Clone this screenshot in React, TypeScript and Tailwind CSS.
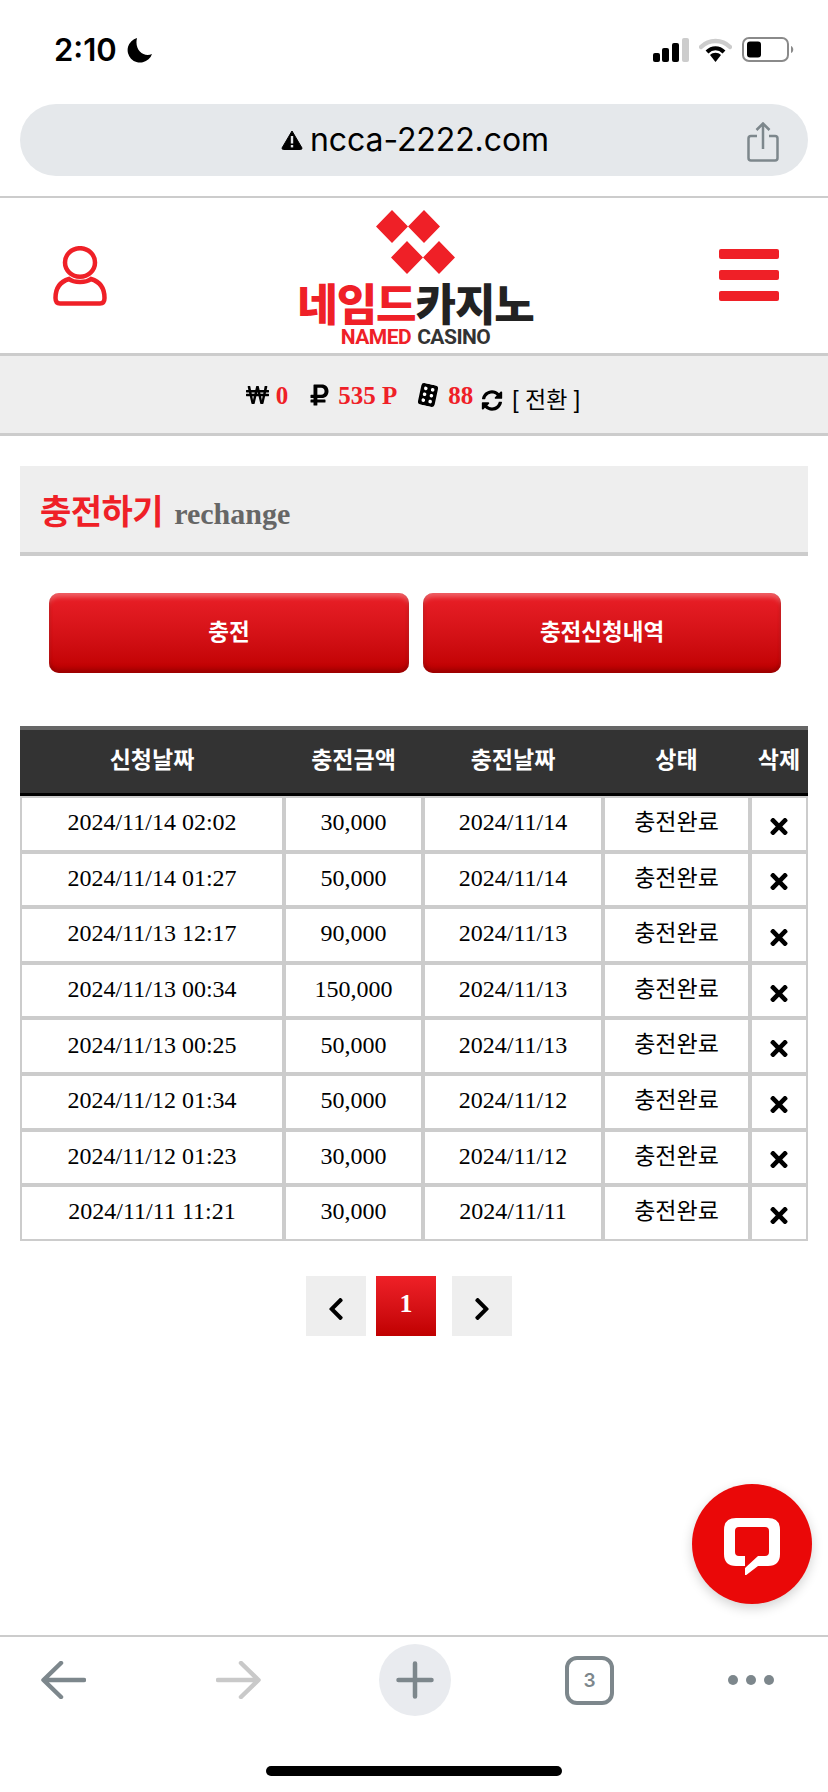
import { FaWonSign, FaRubleSign, FaSyncAlt, FaTimes, FaChevronLeft, FaChevronRight } from "react-icons/fa";

const rows = [
  ["2024/11/14 02:02", "30,000", "2024/11/14"],
  ["2024/11/14 01:27", "50,000", "2024/11/14"],
  ["2024/11/13 12:17", "90,000", "2024/11/13"],
  ["2024/11/13 00:34", "150,000", "2024/11/13"],
  ["2024/11/13 00:25", "50,000", "2024/11/13"],
  ["2024/11/12 01:34", "50,000", "2024/11/12"],
  ["2024/11/12 01:23", "30,000", "2024/11/12"],
  ["2024/11/11 11:21", "30,000", "2024/11/11"],
];

const serif = "font-['Liberation_Serif','Noto_Sans_CJK_KR',serif]";

function Status() {
  return (
    <div className="h-[104px] flex items-start justify-between pt-[37px] pl-[54px] pr-[33px]">
      <div className="flex items-center gap-[10px] h-[25px]">
        <span className="font-['Inter',sans-serif] font-semibold text-[31px] leading-[25px] text-black">2:10</span>
        <svg width="26" height="26" viewBox="0 0 26 26"><path d="M10 1 A12.5 12.5 0 1 0 25 17 C17 21 7 13 10 1Z" fill="#000" /></svg>
      </div>
      <div className="flex items-center gap-[10px] h-[25px]">
        <svg width="36" height="24" viewBox="0 0 36 24">
          <rect x="0" y="15" width="7" height="9" rx="2" fill="#000" />
          <rect x="9" y="10" width="7" height="14" rx="2" fill="#000" />
          <rect x="19" y="5" width="7" height="19" rx="2" fill="#000" />
          <rect x="29" y="0" width="7" height="24" rx="2" fill="#ccc" />
        </svg>
        <svg width="33" height="24" viewBox="0 0 33 24">
          <path d="M2 9 C10 1 23 1 31 9" fill="none" stroke="#ccc" strokeWidth="4.5" strokeLinecap="round" />
          <path d="M8 14 C13 9 20 9 25 14" fill="none" stroke="#000" strokeWidth="4" />
          <path d="M11 17 C14 14 19 14 22 17 L16.5 24Z" fill="#000" />
        </svg>
        <svg width="53" height="25" viewBox="0 0 53 25">
          <rect x="1" y="1" width="45" height="23" rx="6" fill="none" stroke="#8a8a8a" strokeWidth="2" />
          <rect x="5" y="4.5" width="14" height="16" rx="3" fill="#000" />
          <path d="M49 9 C52 10 52 15 49 16Z" fill="#8a8a8a" />
        </svg>
      </div>
    </div>
  );
}

function UrlBar() {
  return (
    <div className="mx-5 h-[72px] rounded-[36px] bg-[#e5e8eb] flex items-center relative">
      <div className="flex-1 flex items-center justify-center gap-[7px] pl-[2px]">
        <svg width="22" height="20" viewBox="0 0 22 20">
          <path d="M11 1 L21 18 Q21 19.5 19.5 19.5 H2.5 Q1 19.5 1 18Z" fill="#000" stroke="#000" strokeLinejoin="round" />
          <rect x="9.8" y="6" width="2.4" height="7.5" fill="#e5e8eb" />
          <rect x="9.8" y="15" width="2.4" height="2.4" fill="#e5e8eb" />
        </svg>
        <span className="font-['Inter',sans-serif] text-[32px] leading-[40px] tracking-[-0.1px] text-black">ncca-2222.com</span>
      </div>
      <svg className="absolute right-[29px] top-[18px]" width="32" height="40" viewBox="0 0 32 40" fill="none" stroke="#7d878c" strokeWidth="2.5">
        <path d="M10 14 H4 Q1.5 14 1.5 16.5 V36 Q1.5 38.5 4 38.5 H28 Q30.5 38.5 30.5 36 V16.5 Q30.5 14 28 14 H22" />
        <path d="M16 27 V2 M9.5 8 L16 1.5 L22.5 8" />
      </svg>
    </div>
  );
}

function Logo() {
  return (
    <div className="flex flex-col items-center w-[250px]">
      <svg width="79" height="64" viewBox="0 0 79 64">
        <path d="M16 0 L32 16.5 L16 33 L0 16.5Z M48 0 L64 16.5 L48 33 L32 16.5Z M31 31 L47 47.5 L31 64 L15 47.5Z M63 31 L79 47.5 L63 64 L47 47.5Z" fill="#ef2027" />
      </svg>
      <div className="mt-[9px] h-[38px] flex items-center font-['Noto_Sans_CJK_KR',sans-serif] font-black text-[44px] leading-[38px] tracking-[-1.1px] whitespace-nowrap">
        <span className="text-[#ef2027]">네임드</span><span className="text-[#222]">카지노</span>
      </div>
      <div className="mt-[8px] h-[16px] flex items-center gap-[6px] font-['Roboto',sans-serif] font-bold text-[21px] leading-[16px] tracking-[-0.5px] whitespace-nowrap">
        <span className="text-[#ef2027]">NAMED</span><span className="text-[#333]">CASINO</span>
      </div>
    </div>
  );
}

function Header() {
  return (
    <div className="h-[160px] border-t-2 border-b-[3px] border-[#ccc] flex items-center justify-between pl-[53px] pr-[49px] mt-[20px]">
      <svg width="54" height="60" viewBox="0 0 54 60" fill="none" stroke="#ef2027" strokeWidth="4.5">
        <ellipse cx="27" cy="16.5" rx="15" ry="14.3" />
        <path d="M16 33 C6 36 2.5 44 2.5 52 Q2.5 57.5 7 57.5 H47 Q51.5 57.5 51.5 52 C51.5 44 48 36 38 33 C33 37 21 37 16 33Z" />
      </svg>
      <div className="mt-[4px] ml-[5px]"><Logo /></div>
      <div className="flex flex-col gap-[11px] -mt-[2px]">
        <div className="w-[60px] h-[10px] bg-[#ef2027] rounded-[2px]" />
        <div className="w-[60px] h-[10px] bg-[#ef2027] rounded-[2px]" />
        <div className="w-[60px] h-[10px] bg-[#ef2027] rounded-[2px]" />
      </div>
    </div>
  );
}

function Stats() {
  return (
    <div className={`h-[80px] bg-[#eee] border-b-[3px] border-[#ccc] flex items-center justify-center pr-[2px] ${serif} text-[25px] font-bold text-[#ef2027] whitespace-nowrap`}>
      <FaWonSign className="text-black w-[23px] h-[22px] mr-[7px]" />
      <span className="mt-[3px]">0</span>
      <FaRubleSign className="text-black w-[19px] h-[24px] ml-[22px] mr-[9px] mt-[1px]" />
      <span className="mt-[3px]">535 P</span>
      <svg width="22" height="22" viewBox="0 0 22 22" className="ml-[20px] mr-[9px] rotate-[12deg]">
        <rect x="2.5" y="0" width="17" height="22" rx="3" fill="#000" />
        <circle cx="7.5" cy="5" r="1.8" fill="#fff" /><circle cx="14.5" cy="5" r="1.8" fill="#fff" />
        <circle cx="7.5" cy="11" r="1.8" fill="#fff" /><circle cx="14.5" cy="11" r="1.8" fill="#fff" />
        <circle cx="7.5" cy="17" r="1.8" fill="#fff" /><circle cx="14.5" cy="17" r="1.8" fill="#fff" />
      </svg>
      <span className="mt-[3px]">88</span>
      <FaSyncAlt className="text-black w-[22px] h-[21px] ml-[8px] mr-[9px] mt-[11px]" />
      <span className="font-normal text-black text-[23px] mt-[11px] font-['Liberation_Sans','Noto_Sans_CJK_KR',sans-serif]">[ 전환 ]</span>
    </div>
  );
}

function Title() {
  return (
    <div className="mx-5 mt-[30px] h-[90px] bg-[#eee] border-b-4 border-[#ccc] flex items-end pb-[18px] pl-[20px]">
      <span className="font-['Noto_Sans_CJK_KR',sans-serif] font-bold text-[34px] leading-[44px] mb-[2px] text-[#ef2027] tracking-[-0.5px]">충전하기</span>
      <span className={`${serif} font-bold text-[30px] leading-[40px] text-[#666] ml-[11px]`}>rechange</span>
    </div>
  );
}

function Btn({ label, w }: { label: string; w: string }) {
  return (
    <div className={`${w} h-[80px] pb-[6px] rounded-[10px] flex items-center justify-center bg-gradient-to-b from-[#ea1f27] to-[#c00000] shadow-[inset_0_6px_5px_-2px_rgba(255,255,255,0.3),inset_0_-6px_5px_-2px_rgba(120,0,0,0.5),inset_3px_0_3px_-2px_rgba(120,0,0,0.25),inset_-3px_0_3px_-2px_rgba(120,0,0,0.25)] font-['Noto_Sans_CJK_KR',sans-serif] font-bold text-[22.5px] leading-[30px] text-white`}>
      {label}
    </div>
  );
}

function Table() {
  const ko = "font-['Noto_Sans_CJK_KR',sans-serif]";
  const th = `${ko} font-bold text-[23px] text-white text-center align-middle pb-[6px] bg-[#333] border-t-4 border-t-[#666] border-b-[3px] border-b-black`;
  const td = `border-2 border-[#ccc] text-center align-middle text-[24px] pb-[3px] text-black ${serif}`;
  return (
    <div className="mx-5 mt-[53px]">
      <table className="w-[788px] table-fixed border-separate border-spacing-0">
        <colgroup>
          <col className="w-[264px]" />
          <col className="w-[139px]" />
          <col className="w-[180px]" />
          <col className="w-[147px]" />
          <col className="w-[58px]" />
        </colgroup>
        <thead>
          <tr className="h-[70px]">
            <th className={th}>신청날짜</th>
            <th className={th}>충전금액</th>
            <th className={th}>충전날짜</th>
            <th className={th}>상태</th>
            <th className={th}>삭제</th>
          </tr>
        </thead>
        <tbody>
          {rows.map((r) => (
            <tr key={r[0]} className="h-[55.6px]">
              <td className={td}>{r[0]}</td>
              <td className={td}>{r[1]}</td>
              <td className={td}>{r[2]}</td>
              <td className={`border-2 border-[#ccc] text-center align-middle text-[23px] text-black pb-[7px] ${ko}`}>충전완료</td>
              <td className="border-2 border-[#ccc] align-middle pt-[5px]"><FaTimes className="text-black w-[22px] h-[25px] mx-auto" /></td>
            </tr>
          ))}
        </tbody>
      </table>
    </div>
  );
}

function Pager() {
  return (
    <div className="mt-[35px] flex justify-center pr-[10px]">
      <div className="w-[60px] h-[60px] bg-[#eee] flex items-center justify-center pt-[6px]"><FaChevronLeft className="text-black w-[20px] h-[26px]" /></div>
      <div className={`w-[60px] h-[60px] ml-[10px] bg-gradient-to-b from-[#ef2027] to-[#c00000] flex items-center justify-center pb-[4px] ${serif} font-bold text-[26px] text-white`}>1</div>
      <div className="w-[60px] h-[60px] ml-[16px] bg-[#eee] flex items-center justify-center pt-[6px]"><FaChevronRight className="text-black w-[20px] h-[26px]" /></div>
    </div>
  );
}

function BottomBar() {
  return (
    <div className="absolute left-0 right-0 bottom-0 h-[157px] border-t-2 border-[#ccc] bg-white">
      <div className="h-[86px] flex items-center pl-[41px]">
        <svg width="45" height="38" viewBox="0 0 45 38" fill="none" stroke="#7d878c" strokeWidth="4.5" strokeLinecap="round" strokeLinejoin="round">
          <path d="M43 19 H3 M20 2 L2.5 19 L20 36" />
        </svg>
        <svg width="45" height="38" viewBox="0 0 45 38" fill="none" stroke="#c9c9c9" strokeWidth="4.5" strokeLinecap="round" strokeLinejoin="round" className="ml-[130px]">
          <path d="M2 19 H42 M25 2 L42.5 19 L25 36" />
        </svg>
        <div className="w-[72px] h-[72px] ml-[118px] rounded-full bg-[#e9ebef] flex items-center justify-center">
          <svg width="38" height="38" viewBox="0 0 38 38" fill="none" stroke="#7d878c" strokeWidth="4.5" strokeLinecap="round">
            <path d="M19 2.5 V35.5 M2.5 19 H35.5" />
          </svg>
        </div>
        <div className="w-[49px] h-[49px] ml-[114px] rounded-[12px] border-[4px] border-[#7d878c] flex items-center justify-center font-['Inter',sans-serif] font-semibold text-[19px] leading-none text-[#7d878c]">3</div>
        <div className="flex gap-[8px] ml-[114px]">
          <div className="w-[10px] h-[10px] rounded-full bg-[#7d878c]" />
          <div className="w-[10px] h-[10px] rounded-full bg-[#7d878c]" />
          <div className="w-[10px] h-[10px] rounded-full bg-[#7d878c]" />
        </div>
      </div>
      <div className="mt-[43px] mx-auto w-[296px] h-[10px] rounded-full bg-black" />
    </div>
  );
}

function Chat() {
  return (
    <div className="absolute left-[692px] top-[1484px] w-[120px] h-[120px] rounded-full bg-[#ea0808] shadow-[0_4px_12px_rgba(0,0,0,0.18)] flex items-center justify-center">
      <svg width="56" height="57" viewBox="0 0 56 57" className="mt-[4px]">
        <path fillRule="evenodd" fill="#fff" d="M12 0 H44 Q56 0 56 12 V36 Q56 48 44 48 H34 L21 58 V48 H12 Q0 48 0 36 V12 Q0 0 12 0Z M15 9 H41 Q45 9 45 13 V34 Q45 38 41 38 H34 L21 50 V38 H15 Q11 38 11 34 V13 Q11 9 15 9Z" />
      </svg>
    </div>
  );
}

export default function App() {
  return (
    <div className="relative w-[828px] h-[1792px] bg-white overflow-hidden">
      <Status />
      <UrlBar />
      <Header />
      <Stats />
      <Title />
      <div className="mt-[37px] ml-[49px] flex gap-[14px]">
        <Btn label="충전" w="w-[360px]" />
        <Btn label="충전신청내역" w="w-[358px]" />
      </div>
      <Table />
      <Pager />
      <Chat />
      <BottomBar />
    </div>
  );
}
